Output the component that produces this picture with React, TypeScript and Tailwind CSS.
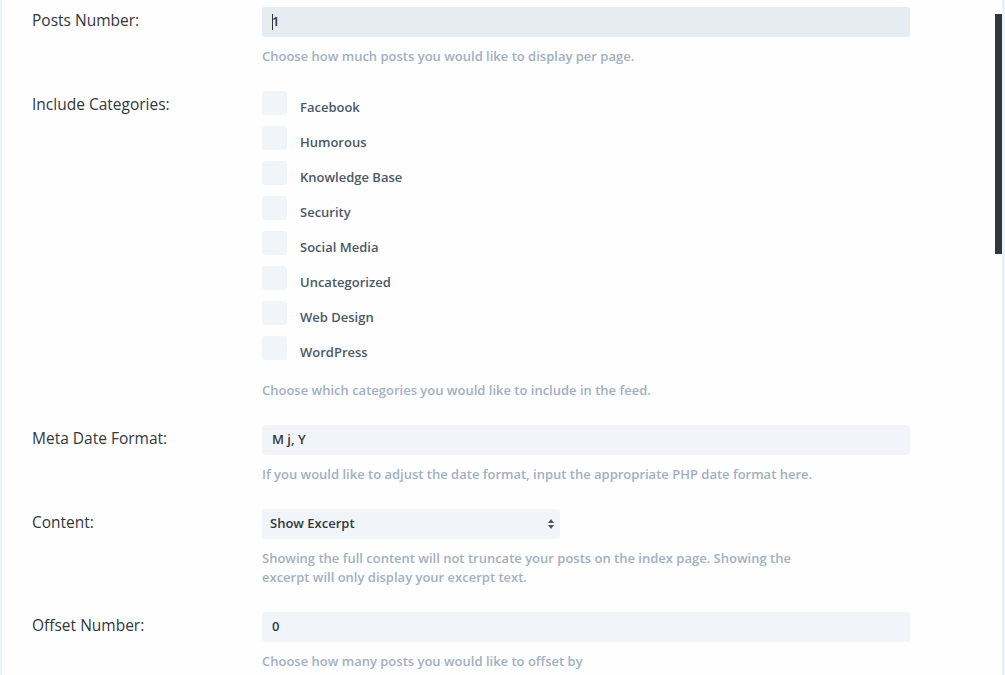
import React from "react";

const categories = [
  "Facebook",
  "Humorous",
  "Knowledge Base",
  "Security",
  "Social Media",
  "Uncategorized",
  "Web Design",
  "WordPress",
];

function Row({ label, children }: { label: string; children: React.ReactNode }) {
  return (
    <div className="flex pb-[25px]">
      <div className="w-[230px] shrink-0 pt-[3px] text-[15.5px] leading-[20px] font-normal text-[#32373c]">
        {label}
      </div>
      <div className="flex-1">{children}</div>
    </div>
  );
}

function Desc({ children }: { children: React.ReactNode }) {
  return (
    <p className="mt-[10px] max-w-[560px] text-[13px] leading-[19px] font-semibold text-[#a2b0c1]">
      {children}
    </p>
  );
}

function TextInput({ value, focused }: { value: string; focused?: boolean }) {
  return (
    <div
      className={
        "flex h-[30px] w-[648px] items-center rounded-[3px] px-[10px] text-[13px] font-semibold text-[#32373c] " +
        (focused ? "bg-[#e6ecf2]" : "bg-[#f1f5f9]")
      }
    >
      {focused && <span className="mr-[-1px] h-[16px] w-px bg-[#32373c]" />}
      <span>{value}</span>
    </div>
  );
}

export default function App() {
  return (
    <div
      className="flex h-[675px] w-[1005px] overflow-hidden bg-[#fefefe]"
      style={{ fontFamily: '"Open Sans", "Noto Sans", sans-serif' }}
    >
      <div className="w-[2px] shrink-0 bg-[#e8f3fb]" />
      <div className="flex-1 pl-[30px] pt-[7px]">
        <Row label="Posts Number:">
          <TextInput value="1" focused />
          <Desc>Choose how much posts you would like to display per page.</Desc>
        </Row>

        <Row label="Include Categories:">
          <div className="flex flex-col gap-[11px] pb-[11px]">
            {categories.map((c) => (
              <label key={c} className="flex h-[24px] items-start">
                <span className="h-[24px] w-[25px] shrink-0 rounded-[3px] bg-[#f1f5f9]" />
                <span className="ml-[13px] pt-[7px] text-[13px] leading-[19px] font-semibold text-[#4c5866]">
                  {c}
                </span>
              </label>
            ))}
          </div>
          <Desc>Choose which categories you would like to include in the feed.</Desc>
        </Row>

        <Row label="Meta Date Format:">
          <TextInput value="M j, Y" />
          <Desc>
            If you would like to adjust the date format, input the appropriate PHP date format
            here.
          </Desc>
        </Row>

        <Row label="Content:">
          <div className="flex h-[30px] w-[298px] items-center justify-between rounded-[3px] bg-[#f1f5f9] pl-[8px] pr-[5px] text-[13px] font-semibold text-[#32373c]">
            <span>Show Excerpt</span>
            <svg width="8" height="12" viewBox="0 0 8 12" className="text-[#4c5866]">
              <path d="M4 1 L7 5 L1 5 Z" fill="currentColor" />
              <path d="M4 11 L7 7 L1 7 Z" fill="currentColor" />
            </svg>
          </div>
          <Desc>
            Showing the full content will not truncate your posts on the index page. Showing the
            excerpt will only display your excerpt text.
          </Desc>
        </Row>

        <Row label="Offset Number:">
          <TextInput value="0" />
          <Desc>Choose how many posts you would like to offset by</Desc>
        </Row>
      </div>
      <div className="flex w-[10px] shrink-0">
        <div className="w-[7px] pt-[14px]">
          <div className="h-[240px] w-[7px] bg-[#32373c]" />
        </div>
        <div className="w-[3px] bg-[#e8f3fb]" />
      </div>
    </div>
  );
}
